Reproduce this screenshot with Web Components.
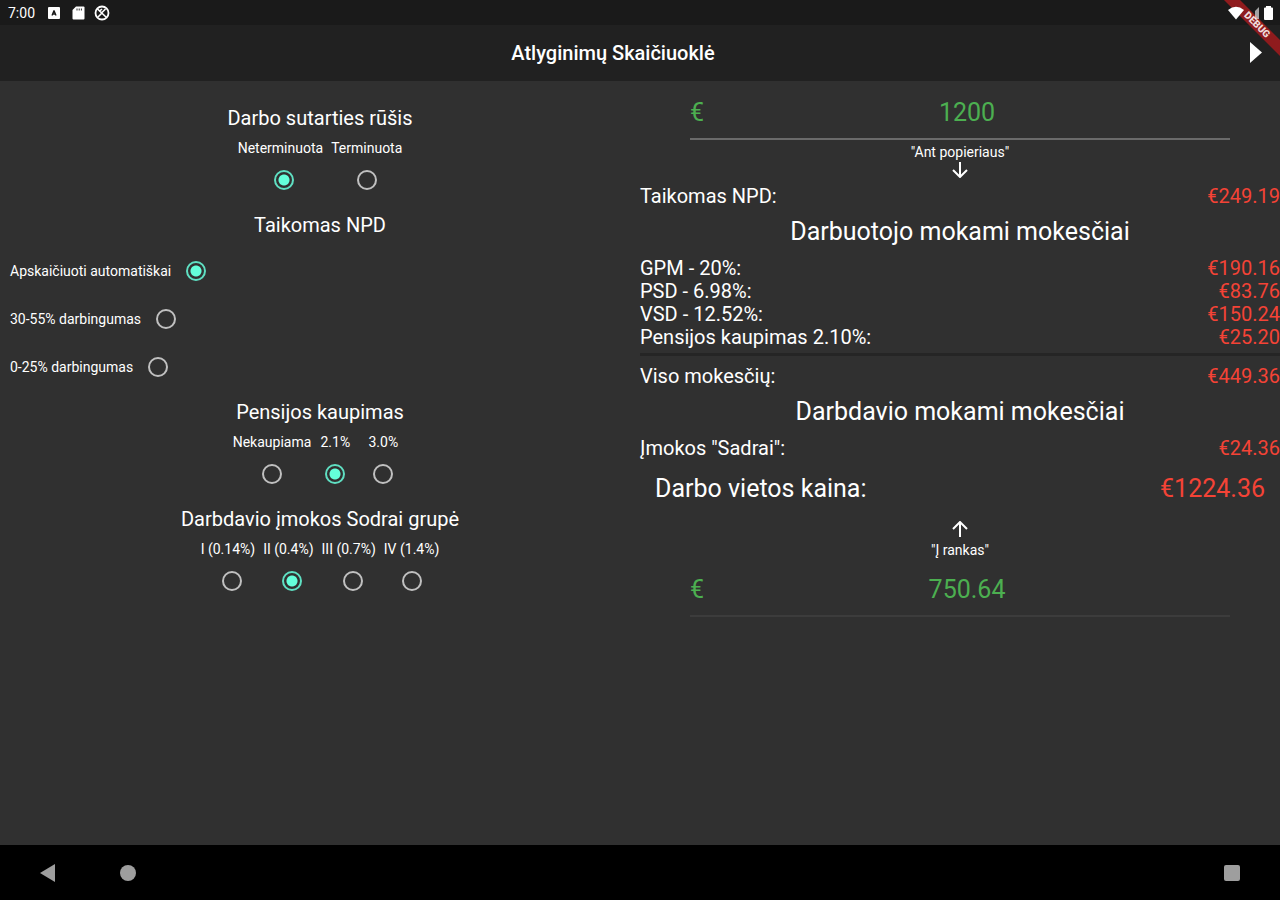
<!DOCTYPE html>
<html lang="lt">
<head>
<meta charset="utf-8">
<meta name="viewport" content="width=device-width, initial-scale=1">
<title>Atlyginimų Skaičiuoklė</title>
<style>
    body {
        margin: 0;
        background-color: #303030;
        color: #fff;
        font-family: Roboto, "Liberation Sans", sans-serif;
        font-size: 20px;
        line-height: 23px;
    }
</style>
</head>
<body>
<salary-app>
    <status-bar slot="top">7:00</status-bar>
    <app-bar slot="top">Atlyginimų Skaičiuoklė</app-bar>

    <radio-group slot="settings" name="contract" value="n" spaced>
        Darbo sutarties rūšis
        <radio-item value="n" label="Neterminuota"></radio-item>
        <radio-item value="t" label="Terminuota"></radio-item>
    </radio-group>
    <radio-group slot="settings" name="npd" value="auto" vertical>
        Taikomas NPD
        <radio-item value="auto" label="Apskaičiuoti automatiškai"></radio-item>
        <radio-item value="30" label="30-55% darbingumas"></radio-item>
        <radio-item value="0" label="0-25% darbingumas"></radio-item>
    </radio-group>
    <radio-group slot="settings" name="pension" value="2.1">
        Pensijos kaupimas
        <radio-item value="0" label="Nekaupiama"></radio-item>
        <radio-item value="2.1" label="2.1%"></radio-item>
        <radio-item value="3" label="3.0%"></radio-item>
    </radio-group>
    <radio-group slot="settings" name="sodra" value="2" spaced>
        Darbdavio įmokos Sodrai grupė
        <radio-item value="1" label="I (0.14%)"></radio-item>
        <radio-item value="2" label="II (0.4%)"></radio-item>
        <radio-item value="3" label="III (0.7%)"></radio-item>
        <radio-item value="4" label="IV (1.4%)"></radio-item>
    </radio-group>

    <money-field slot="result" value="1200" arrow="down">"Ant popieriaus"</money-field>
    <tax-table slot="result">
        <tax-item label="Taikomas NPD:" amount="€249.19"></tax-item>
    </tax-table>
    <tax-table slot="result">
        <span slot="title">Darbuotojo mokami mokesčiai</span>
        <tax-item label="GPM - 20%:" amount="€190.16"></tax-item>
        <tax-item label="PSD - 6.98%:" amount="€83.76"></tax-item>
        <tax-item label="VSD - 12.52%:" amount="€150.24"></tax-item>
        <tax-item label="Pensijos kaupimas 2.10%:" amount="€25.20"></tax-item>
    </tax-table>
    <tax-table slot="result" total>
        <tax-item label="Viso mokesčių:" amount="€449.36"></tax-item>
    </tax-table>
    <tax-table slot="result">
        <span slot="title">Darbdavio mokami mokesčiai</span>
        <tax-item label='Įmokos "Sadrai":' amount="€24.36"></tax-item>
    </tax-table>
    <tax-table slot="result" large>
        <tax-item label="Darbo vietos kaina:" amount="€1224.36"></tax-item>
    </tax-table>
    <money-field slot="result" value="750.64" arrow="up" faint>"Į rankas"</money-field>

    <nav-bar slot="bottom"></nav-bar>
</salary-app>

<script>
function makeTemplate(html) {
    const template = document.createElement("template")
    template.innerHTML = html
    return template
}

class BaseElement extends HTMLElement {
    constructor() {
        super();
        this.shadow = this.attachShadow({mode: "open"})
        this.shadow.append(this.constructor.template.content.cloneNode(true))
    }
}

class SalaryApp extends BaseElement {
    static template = makeTemplate(/*html*/`
    <style>
    :host {
        display: flex;
        flex-direction: column;
        min-height: 100vh;
        position: relative;
        overflow: hidden;
    }
    main {
        flex: 1;
        display: grid;
        grid-template-columns: 1fr 1fr;
        align-items: start;
    }
    .settings {
        display: flex;
        flex-direction: column;
        gap: 10px;
        padding-top: 26px;
    }
    .result {
        padding-top: 8px;
    }
    .debug {
        position: absolute;
        top: 0;
        right: 0;
        pointer-events: none;
    }
    .debug text {
        font-size: 10px;
        font-weight: 900;
    }
    </style>
    <slot name="top"></slot>
    <main>
        <section class="settings"><slot name="settings"></slot></section>
        <section class="result"><slot name="result"></slot></section>
    </main>
    <slot name="bottom"></slot>
    <svg class="debug" width="56" height="56" viewBox="0 0 56 56">
        <path d="M0 0H16L56 40V56Z" fill="#8f1b1d"/>
        <text transform="translate(33 25) rotate(45)" text-anchor="middle" y="3" fill="#f0dcdc">DEBUG</text>
    </svg>
    `)
}

class StatusBar extends BaseElement {
    static template = makeTemplate(/*html*/`
    <style>
    :host {
        display: flex;
        align-items: center;
        gap: 11px;
        height: 25px;
        padding: 0 6px 0 8px;
        background-color: #1a1a1a;
        font-size: 14px;
        line-height: 16px;
    }
    svg {
        display: block;
        fill: #fff;
    }
    /* the system icons stay above the debug ribbon */
    .system {
        position: relative;
        z-index: 1;
        display: flex;
        align-items: center;
        gap: 3px;
        margin-left: auto;
    }
    .notes {
        display: flex;
        align-items: center;
        gap: 8px;
    }
    </style>
    <span><slot></slot></span>
    <span class="notes">
        <svg width="16" height="16" viewBox="0 0 16 16">
            <rect x="2" y="2" width="12" height="12" rx="1"/>
            <path d="M8 5.500L6 10.500M8 5.500l2 5M6.500 9h3" stroke="#1a1a1a" stroke-width="1.300" fill="none"/>
        </svg>
        <svg width="16" height="16" viewBox="0 0 16 16">
            <path d="M6 1.500h7.500q1 0 1 1v11q0 1-1 1h-10q-1 0-1-1V5z"/>
            <path d="M7 3.500v2M9.200 3.500v2M11.400 3.500v2" stroke="#1a1a1a" stroke-width=".9"/>
        </svg>
        <svg width="16" height="16" viewBox="0 0 16 16">
            <circle cx="8" cy="8" r="6.500" fill="none" stroke="#fff" stroke-width="1.800"/>
            <path d="M3.500 4l9 8.500M11.500 4L8 7.500M8 8l-4 4M5 6.500L8 4" fill="none" stroke="#fff" stroke-width="1.600"/>
        </svg>
    </span>
    <span class="system">
        <svg width="16" height="14" viewBox="0 0 16 14"><path d="M0 4Q8-2.500 16 4L8 13.500z"/></svg>
        <svg width="13" height="14" viewBox="0 0 13 14">
            <path d="M12 1v12H8V5z" opacity=".6"/>
        </svg>
        <svg width="11" height="14" viewBox="0 0 11 14"><path d="M3 1.500V0h5v1.500h1q1 0 1 1V13q0 1-1 1H2q-1 0-1-1V2.500q0-1 1-1z"/></svg>
    </span>
    `)
}

class AppBar extends BaseElement {
    static template = makeTemplate(/*html*/`
    <style>
    :host {
        display: grid;
        grid-template-columns: 1fr 48px;
        align-items: center;
        height: 56px;
        background-color: #212121;
    }
    h1 {
        margin: 0;
        padding-right: 54px;
        grid-column: 1 / 3;
        grid-row: 1;
        font-size: 20px;
        font-weight: 500;
        text-align: center;
    }
    button {
        grid-column: 2;
        grid-row: 1;
        height: 56px;
        padding: 0;
        border: 0;
        background: none;
    }
    svg {
        display: block;
        margin: 0 auto;
    }
    </style>
    <h1><slot></slot></h1>
    <button aria-label="Toliau">
        <svg width="12" height="24" viewBox="0 0 12 24"><path d="M0 1v21l12-10.500z" fill="#fff"/></svg>
    </button>
    `)
}

class RadioGroup extends BaseElement {
    static template = makeTemplate(/*html*/`
    <style>
    :host {
        display: block;
    }
    fieldset {
        margin: 0;
        padding: 0;
        border: 0;
        min-width: 0;
    }
    legend {
        width: 100%;
        padding: 0 0 10px;
        text-align: center;
    }
    .options {
        display: flex;
        justify-content: center;
    }
    .option {
        display: flex;
        flex-direction: column;
        align-items: center;
    }
    label {
        font-size: 14px;
        line-height: 16px;
    }
    :host([spaced]) .option:not(:last-child) label {
        padding-right: 8px;
    }
    :host([vertical]) .options {
        flex-direction: column;
        padding-left: 10px;
    }
    :host([vertical]) .option {
        flex-direction: row;
        gap: 1px;
    }
    input {
        appearance: none;
        width: 20px;
        height: 20px;
        margin: 14px;
        border: 2px solid #c0c0c0;
        border-radius: 50%;
    }
    input:checked {
        border-color: #5fdfc2;
        background: radial-gradient(circle, #64ffda 5px, transparent 6px);
    }
    </style>
    <fieldset>
        <legend><slot></slot></legend>
        <div class="options"></div>
    </fieldset>
    `)

    connectedCallback() {
        const options = this.shadow.querySelector(".options")
        const name = this.getAttribute("name")

        this.querySelectorAll("radio-item").forEach((item, i) => {
            const option = document.createElement("div")
            option.className = "option"

            const label = document.createElement("label")
            label.textContent = item.getAttribute("label")
            label.htmlFor = name + i

            const input = document.createElement("input")
            input.type = "radio"
            input.name = name
            input.id = name + i
            input.value = item.getAttribute("value")
            input.checked = input.value === this.getAttribute("value")

            option.append(label, input)
            options.append(option)
        })
    }
}

// only carries data for its radio-group
class RadioItem extends BaseElement {
    static template = makeTemplate(`<style>:host { display: none; }</style>`)
}

class MoneyField extends BaseElement {
    static template = makeTemplate(/*html*/`
    <style>
    :host {
        display: flex;
        flex-direction: column;
        align-items: stretch;
    }
    .field {
        display: flex;
        align-items: center;
        height: 46px;
        margin: 0 50px;
        padding-bottom: 3px;
        border-bottom: 2px solid #6a6a6a;
        color: #4caf50;
        font-size: 25px;
    }
    :host([faint]) .field {
        border-color: #3c3c3c;
    }
    input {
        flex: 1;
        min-width: 0;
        padding: 0;
        border: 0;
        outline: 0;
        background: none;
        color: inherit;
        font: inherit;
        text-align: center;
    }
    .hint {
        display: flex;
        flex-direction: column;
        align-items: center;
        padding: 4px 0 5px;
        font-size: 14px;
        line-height: 16px;
    }
    svg {
        display: block;
        margin: 2px 0;
        fill: none;
        stroke: #fff;
        stroke-width: 2;
    }
    :host([arrow="up"]) {
        flex-direction: column-reverse;
    }
    :host([arrow="up"]) .hint {
        flex-direction: column-reverse;
        padding: 7px 0 8px;
    }
    :host([arrow="up"]) svg {
        margin: 0 0 5px;
        transform: rotate(180deg);
    }
    </style>
    <div class="field"><span>€</span><input id="amount" inputmode="decimal"></div>
    <div class="hint">
        <label for="amount"><slot></slot></label>
        <svg width="16" height="16" viewBox="0 0 16 16"><path d="M8 0v14M1 8l7 7 7-7"/></svg>
    </div>
    `)

    connectedCallback() {
        this.shadow.querySelector("input").value = this.getAttribute("value")
    }
}

class TaxTable extends BaseElement {
    static template = makeTemplate(/*html*/`
    <style>
    :host {
        display: block;
    }
    table {
        width: 100%;
        border-collapse: collapse;
    }
    caption {
        font-size: 25px;
        line-height: 29px;
    }
    ::slotted([slot="title"]) {
        display: block;
        padding: 9px 0 11px;
    }
    th, td {
        padding: 0;
        font-weight: 400;
        text-align: left;
    }
    td {
        color: #f44336;
        text-align: right;
    }
    :host([total]) {
        margin-top: 4px;
        padding-top: 9px;
        border-top: 3px solid #252525;
    }
    :host([large]) {
        padding: 17px 15px 14px;
        font-size: 25px;
    }
    </style>
    <table>
        <caption><slot name="title"></slot></caption>
        <tbody></tbody>
    </table>
    `)

    connectedCallback() {
        const body = this.shadow.querySelector("tbody")

        this.querySelectorAll("tax-item").forEach(item => {
            const row = body.insertRow()
            const head = document.createElement("th")
            head.scope = "row"
            head.textContent = item.getAttribute("label")
            row.append(head)
            row.insertCell().textContent = item.getAttribute("amount")
        })
    }
}

// only carries data for its tax-table
class TaxItem extends BaseElement {
    static template = makeTemplate(`<style>:host { display: none; }</style>`)
}

class NavBar extends BaseElement {
    static template = makeTemplate(/*html*/`
    <style>
    :host {
        display: flex;
        align-items: center;
        height: 55px;
        padding: 0 8px;
        background-color: #000;
    }
    button {
        width: 80px;
        height: 48px;
        padding: 0;
        border: 0;
        background: none;
    }
    button:last-child {
        margin-left: auto;
    }
    svg {
        display: block;
        margin: 0 auto;
        fill: #9e9e9e;
    }
    </style>
    <button aria-label="Atgal"><svg width="16" height="18" viewBox="0 0 16 18"><path d="M0 9L15 0v18z"/></svg></button>
    <button aria-label="Pradžia"><svg width="16" height="16" viewBox="0 0 16 16"><circle cx="8" cy="8" r="8"/></svg></button>
    <button aria-label="Programos"><svg width="16" height="16" viewBox="0 0 16 16"><rect width="16" height="16" rx="2"/></svg></button>
    `)
}

customElements.define('salary-app', SalaryApp);
customElements.define('status-bar', StatusBar);
customElements.define('app-bar', AppBar);
customElements.define('radio-group', RadioGroup);
customElements.define('radio-item', RadioItem);
customElements.define('money-field', MoneyField);
customElements.define('tax-table', TaxTable);
customElements.define('tax-item', TaxItem);
customElements.define('nav-bar', NavBar);
</script>
</body>
</html>
